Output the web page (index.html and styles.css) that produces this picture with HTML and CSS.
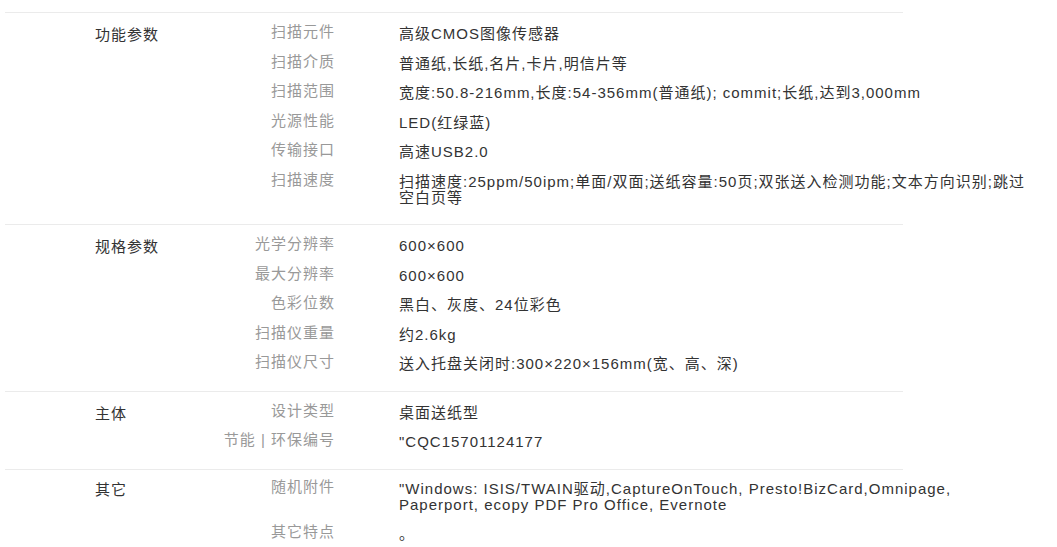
FILE: index.html
```html
<!DOCTYPE html>
<html lang="zh-CN">
<head>
    <meta charset="UTF-8">
    <meta name="viewport" content="width=device-width, initial-scale=1.0">
    <title>规格参数</title>
    <link rel="stylesheet" href="styles.css">
</head>
<body>
    <div class="spec-table">

        <div class="spec-group">
            <div class="group-name">功能参数</div>
            <div class="group-rows">
                <div class="spec-row"><div class="spec-label">扫描元件</div><div class="spec-value">高级CMOS图像传感器</div></div>
                <div class="spec-row"><div class="spec-label">扫描介质</div><div class="spec-value">普通纸,长纸,名片,卡片,明信片等</div></div>
                <div class="spec-row"><div class="spec-label">扫描范围</div><div class="spec-value">宽度:50.8-216mm,长度:54-356mm(普通纸); commit;长纸,达到3,000mm</div></div>
                <div class="spec-row"><div class="spec-label">光源性能</div><div class="spec-value">LED(红绿蓝)</div></div>
                <div class="spec-row"><div class="spec-label">传输接口</div><div class="spec-value">高速USB2.0</div></div>
                <div class="spec-row"><div class="spec-label">扫描速度</div><div class="spec-value">扫描速度:25ppm/50ipm;单面/双面;送纸容量:50页;双张送入检测功能;文本方向识别;跳过空白页等</div></div>
            </div>
        </div>

        <div class="spec-group">
            <div class="group-name">规格参数</div>
            <div class="group-rows">
                <div class="spec-row"><div class="spec-label">光学分辨率</div><div class="spec-value">600×600</div></div>
                <div class="spec-row"><div class="spec-label">最大分辨率</div><div class="spec-value">600×600</div></div>
                <div class="spec-row"><div class="spec-label">色彩位数</div><div class="spec-value">黑白、灰度、24位彩色</div></div>
                <div class="spec-row"><div class="spec-label">扫描仪重量</div><div class="spec-value">约2.6kg</div></div>
                <div class="spec-row"><div class="spec-label">扫描仪尺寸</div><div class="spec-value">送入托盘关闭时:300×220×156mm(宽、高、深)</div></div>
            </div>
        </div>

        <div class="spec-group">
            <div class="group-name">主体</div>
            <div class="group-rows">
                <div class="spec-row"><div class="spec-label">设计类型</div><div class="spec-value">桌面送纸型</div></div>
                <div class="spec-row"><div class="spec-label">节能 | 环保编号</div><div class="spec-value">"CQC15701124177</div></div>
            </div>
        </div>

        <div class="spec-group spec-group-last">
            <div class="group-name">其它</div>
            <div class="group-rows">
                <div class="spec-row"><div class="spec-label">随机附件</div><div class="spec-value">"Windows: ISIS/TWAIN驱动,CaptureOnTouch, Presto!BizCard,Omnipage, Paperport, ecopy PDF Pro Office, Evernote</div></div>
                <div class="spec-row"><div class="spec-label">其它特点</div><div class="spec-value">。</div></div>
            </div>
        </div>

    </div>
</body>
</html>
```

FILE: styles.css
```css
body {
    margin: 0;
    font-family: "Liberation Sans", "Noto Sans CJK SC", sans-serif;
    font-size: 15px;
    letter-spacing: 1px;
    color: #333;
    background: #fff;
}
.spec-table {
    width: 898px;
    margin-left: 5px;
    padding-top: 12px;
}
.spec-group {
    display: flex;
    border-top: 1px solid #ebebeb;
    padding: 13px 0 5px;
}
.spec-group-last {
    padding-top: 11px;
}
.group-name {
    flex: 0 0 90px;
    padding-left: 90px;
    padding-top: 1px;
    line-height: 16px;
    color: #333;
}
.spec-row {
    display: flex;
    align-items: flex-start;
    margin-bottom: 13.5px;
}
.spec-label {
    flex: 0 0 150px;
    text-align: right;
    line-height: 12px;
    color: #999;
}
.spec-value {
    flex: 0 0 634px;
    margin-left: 64px;
    line-height: 16px;
    color: #333;
}
```
